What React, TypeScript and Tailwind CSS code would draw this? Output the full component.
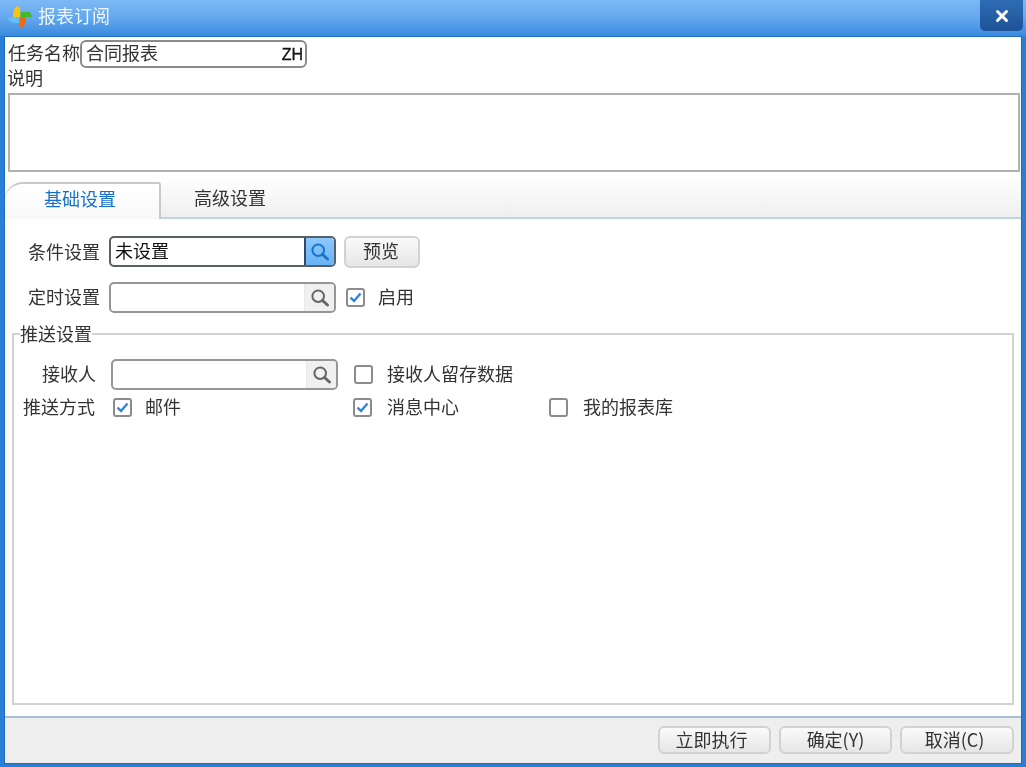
import { X } from "lucide-react";

const FONT = "[font-family:'Noto_Sans_CJK_SC','Liberation_Sans',sans-serif]";

function Logo() {
  return (
    <svg width="24" height="24" viewBox="0 0 24 24" className="shrink-0">
      <path d="M0 14 C1 12.5 4 12 11.5 12 L11.5 18 C6 18 2 17.5 0 14 Z" fill="#62c2f6" />
      <path d="M10 1 C12 2 12.5 5 12.5 12 L5 12 C5 7 6 2 10 1 Z" fill="#f9c312" />
      <path d="M12.5 7 L21 7 C23 7.5 24 10 24 12 L12.5 12 Z" fill="#45b92e" />
      <path d="M11.5 12 L18 12 C18 17 17 21 13 23 L11.5 21.5 Z" fill="#f26a10" />
    </svg>
  );
}

function SearchGlyph({ color }: { color: string }) {
  return (
    <svg width="20" height="20" viewBox="0 0 20 20">
      <circle cx="8.2" cy="8.2" r="5.8" fill="none" stroke={color} strokeWidth="2" />
      <path d="M12.5 12.5 L17.5 17" fill="none" stroke={color} strokeWidth="3" strokeLinecap="round" />
    </svg>
  );
}

function Lookup({ value, active, className }: { value?: string; active?: boolean; className: string }) {
  return (
    <div
      className={`flex h-[31px] w-[227px] overflow-hidden rounded-[5px] border-2 bg-white ${
        active ? "border-[#5a5f66]" : "border-[#969696]"
      } ${className}`}
    >
      <div className="flex-1 pl-[4px] text-[18px] leading-[24px] text-[#111]">{value}</div>
      <div
        className={`flex w-[30px] items-center justify-center ${
          active ? "border-l-2 border-[#2f4a66] bg-gradient-to-b from-[#8cc8fb] to-[#69b2f6]" : "border-l border-[#e8e8e8] bg-[#f0f0f0]"
        }`}
      >
        <SearchGlyph color={active ? "#1b73c8" : "#666666"} />
      </div>
    </div>
  );
}

function Check({
  checked,
  label,
  gap = "ml-[13px]",
  className,
}: {
  checked?: boolean;
  label: string;
  gap?: string;
  className?: string;
}) {
  return (
    <div className={`flex items-center ${className ?? ""}`}>
      <div className="flex h-[19px] w-[19px] items-center justify-center rounded-[3px] border-2 border-[#8c8c8c] bg-white">
        {checked && (
          <svg width="13" height="11" viewBox="0 0 13 11">
            <path d="M1.5 5.5 L5 9 L11.5 1.5" fill="none" stroke="#2f84de" strokeWidth="2.4" />
          </svg>
        )}
      </div>
      <span className={`${gap} pb-[4px] text-[18px] leading-[24px] text-[#333]`}>{label}</span>
    </div>
  );
}

function BarButton({ children, className }: { children: string; className?: string }) {
  return (
    <button
      className={`h-[28px] rounded-[6px] border-2 border-[#d2d2d2] bg-gradient-to-b from-[#fafafa] to-[#e6e6e6] pb-[5px] text-[18px] leading-[22px] text-[#333] ${className ?? ""}`}
    >
      {children}
    </button>
  );
}

export default function App() {
  return (
    <div className={`flex h-[767px] w-[1026px] flex-col overflow-hidden bg-[#2a7ed6] blur-[0.4px] ${FONT}`}>
      {/* title bar */}
      <div className="flex h-[36px] shrink-0 items-start justify-between bg-gradient-to-b from-[#7db8f5] via-[#63a8ee] to-[#3a8ade] pl-[8px] pr-[3px]">
        <div className="flex h-[34px] items-center gap-[6px]">
          <Logo />
          <span className="pb-[4px] text-[18px] text-[#eef6ff]">报表订阅</span>
        </div>
        <div className="flex h-[31px] w-[43px] items-center justify-center rounded-b-[5px] bg-gradient-to-b from-[#2f6cb4] to-[#1d5397]">
          <X size={18} strokeWidth={4} className="text-white" />
        </div>
      </div>

      <div className="mx-[4px] mb-[3px] flex flex-1 flex-col border border-[#1f6cbd] bg-white">
        {/* task header */}
        <div className="flex h-[31px] items-start pl-[3px] pt-[3px]">
          <span className="-mt-[1px] w-[72px] text-[18px] leading-[26px] text-[#333]">任务名称</span>
          <div className="flex h-[28px] w-[227px] items-center justify-between rounded-[6px] border-2 border-[#8b8b8b] pl-[4px] pr-[2px] text-[18px] text-[#333]">
            <span className="pb-[4px] leading-[22px]">合同报表</span>
            <span className="pt-[2px] text-[16px] leading-[22px] text-[#111] [-webkit-text-stroke:0.3px_#111] [font-family:'Liberation_Sans',sans-serif]">ZH</span>
          </div>
        </div>
        <div className="h-[25px] pl-[2px] text-[18px] leading-[18px] text-[#333]">说明</div>
        <div className="ml-[3px] mr-px h-[79px] border-2 border-[#b0b0b0] bg-white" />

        {/* tabs */}
        <div className="mt-[3px] flex h-[44px] items-end border-b-2 border-[#bcd3ea] bg-gradient-to-b from-white to-[#efefef]">
          <div className="-mb-[2px] flex h-[37px] w-[156px] items-center justify-center rounded-tl-[18px] rounded-tr-[3px] border-r-2 border-t-2 border-[#c9c9c9] bg-gradient-to-b from-white to-[#f8f8f8] pb-[6px] pr-[4px] text-[18px] text-[#1672c9]">
            基础设置
          </div>
          <div className="flex h-[36px] w-[138px] items-center justify-center pb-[4px] text-[18px] text-[#333]">高级设置</div>
        </div>

        {/* panel */}
        <div className="flex flex-1 flex-col px-[7px] pb-[11px] pt-[17px]">
          <div className="flex items-start">
            <span className="mt-[2px] w-[90px] pr-[2px] text-right text-[18px] leading-[26px] text-[#333]">条件设置</span>
            <Lookup value="未设置" active className="ml-[7px]" />
            <BarButton className="ml-[8px] h-[32px] w-[76px] pr-[2px]">预览</BarButton>
          </div>
          <div className="mt-[14px] flex items-center">
            <span className="w-[90px] pb-[4px] pr-[2px] text-right text-[18px] leading-[26px] text-[#333]">定时设置</span>
            <Lookup className="ml-[7px]" />
            <Check checked label="启用" className="ml-[10px]" />
          </div>

          <fieldset className="mt-[11px] min-h-0 flex-1 border-2 border-[#d2d2d2] px-[9px]">
            <legend className="-ml-[3px] pb-[2px] text-[18px] leading-[18px] text-[#333]">推送设置</legend>
            <div className="mt-[15px] flex items-center">
              <span className="w-[73px] pb-[3px] text-right text-[18px] leading-[26px] text-[#333]">接收人</span>
              <Lookup className="ml-[15px]" />
              <Check label="接收人留存数据" className="ml-[16px]" gap="ml-[14px]" />
            </div>
            <div className="mt-[3px] flex items-center">
              <span className="w-[72px] pb-[3px] text-right text-[18px] leading-[26px] text-[#333]">推送方式</span>
              <Check checked label="邮件" className="ml-[18px] w-[240px]" />
              <Check checked label="消息中心" gap="ml-[15px]" className="w-[196px]" />
              <Check label="我的报表库" gap="ml-[15px]" />
            </div>
          </fieldset>
        </div>

        {/* footer */}
        <div className="flex h-[47px] items-start justify-end gap-[8px] border-t-2 border-[#a9bed3] bg-[#eeeeee] pr-[7px] pt-[8px]">
          <BarButton className="w-[113px] pr-[6px]">立即执行</BarButton>
          <BarButton className="w-[113px]">确定(Y)</BarButton>
          <BarButton className="w-[114px] pr-[5px]">取消(C)</BarButton>
        </div>
      </div>
    </div>
  );
}
